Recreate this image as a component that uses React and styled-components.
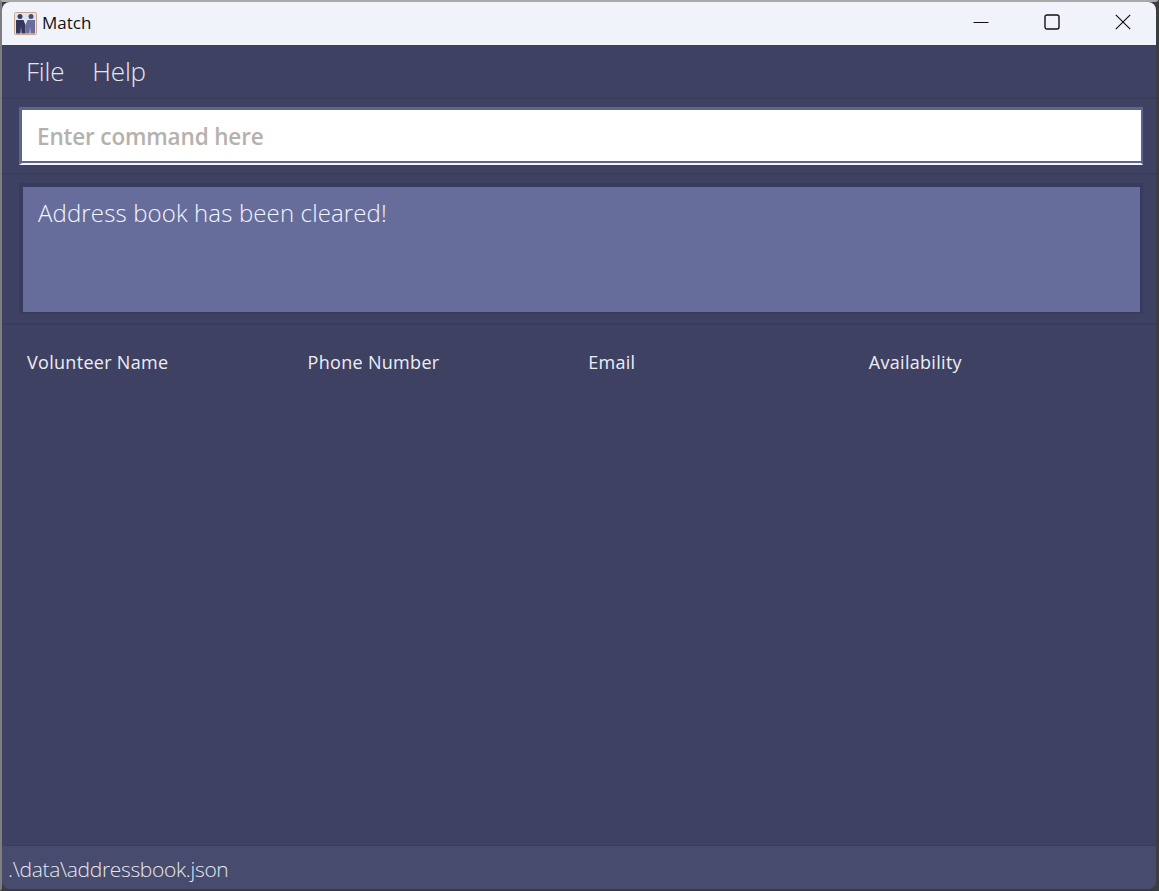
import React from "react";
import styled, { createGlobalStyle } from "styled-components";

const GlobalStyle = createGlobalStyle`
  html, body {
    margin: 0;
    padding: 0;
    height: 100%;
    background: #4a4a4c;
  }
  #root {
    height: 891px;
  }
`;

const Desktop = styled.div`
  width: 1159px;
  height: 891px;
  box-sizing: border-box;
  border-top: 2px solid #a9a9aa;
  border-left: 2px solid #7e7e80;
  border-right: 3px solid #3d3d3e;
  border-bottom: 2px solid #3a3a3b;
  background: #3d3d3e;
  overflow: hidden;
`;

const Window = styled.div`
  width: 100%;
  height: 100%;
  display: flex;
  flex-direction: column;
  background: #3f4163;
  border-radius: 8px;
  overflow: hidden;
`;

const TitleBar = styled.div`
  height: 43px;
  flex: none;
  box-sizing: border-box;
  display: flex;
  align-items: center;
  padding: 0 0 0 12px;
  background: #f0f3f9;
  color: #111;
  font: 400 17px "Open Sans", sans-serif;
`;

const AppIcon = styled.svg`
  width: 23px;
  height: 23px;
  margin: 0 5px 0 0;
  flex: none;
`;

const WindowTitle = styled.span`
  flex: 1;
  padding-bottom: 3px;
`;

const WindowButton = styled.div`
  width: 71px;
  height: 43px;
  box-sizing: border-box;
  display: flex;
  align-items: center;
  justify-content: center;
  padding: 0 0 3px 5px;
`;

const MenuBar = styled.div`
  height: 54px;
  flex: none;
  box-sizing: border-box;
  display: flex;
  align-items: center;
  gap: 28px;
  padding: 0 0 1px 24px;
  border-bottom: 2px solid #3a3c5c;
`;

const MenuItem = styled.span`
  color: #e6e7ee;
  font: 300 26px "Open Sans", sans-serif;
  letter-spacing: -0.2px;
`;

const CommandSection = styled.div`
  height: 76px;
  flex: none;
  box-sizing: border-box;
  padding: 8px 13px 0 17px;
  border-bottom: 2px solid #3a3c5c;
`;

const CommandFrame = styled.div`
  height: 58px;
  box-sizing: border-box;
  border: 3px solid #5f638f;
  border-right-width: 2px;
  border-bottom: 2px solid #f4f4f8;
  background: #fff;
  display: flex;
  align-items: center;
  padding-left: 15px;
  box-shadow: inset 0 -2px 0 #5f638f;
  color: #b5b1ac;
  font: 600 22.5px "Open Sans", sans-serif;
  letter-spacing: -0.15px;
`;

const ResultSection = styled.div`
  height: 150px;
  flex: none;
  box-sizing: border-box;
  padding: 8px 13px 0 17px;
  border-bottom: 2px solid #3a3c5c;
`;

const ResultBox = styled.div`
  height: 131px;
  box-sizing: border-box;
  border-style: solid;
  border-color: #393b5e;
  border-width: 4px 3px 2px 4px;
  background: #676d9b;
  padding: 9px 15px;
  color: #f2f6ff;
  font: 300 24px/33px "Open Sans", sans-serif;
  letter-spacing: 0.13px;
`;

const ListSection = styled.div`
  flex: 1;
  display: grid;
  grid-template-columns: repeat(4, 280.6px);
  align-content: start;
  padding: 24px 0 0 25px;
`;

const ColumnLabel = styled.span`
  color: #eceef4;
  font: 400 18px/26px "Open Sans", sans-serif;
  letter-spacing: 0.3px;
`;

const StatusBar = styled.div`
  height: 44px;
  flex: none;
  box-sizing: border-box;
  display: flex;
  align-items: center;
  padding: 2px 0 0 6px;
  background: #474c6f;
  border-top: 1px solid #3a3c5c;
  color: #e6e7ee;
  font: 300 21px "Open Sans", sans-serif;
  letter-spacing: -0.33px;
`;

const Logo = () => (
  <AppIcon viewBox="0 0 23 23">
    <rect x="0.5" y="0.5" width="22" height="22" rx="1" fill="#dfe4ee" stroke="#c9a68f" />
    <circle cx="6" cy="4.6" r="2.5" fill="#3a3d60" />
    <circle cx="17" cy="4.6" r="2.5" fill="#4a4e74" />
    <path d="M2 8h7.5l2 5v8.5H7.5l-.5-7-.5 7H2z" fill="#34375a" />
    <path d="M21 8h-7.5l-2 5v8.5h4l.5-7 .5 7H21z" fill="#686d9c" />
  </AppIcon>
);

export default function App() {
  return (
    <>
      <GlobalStyle />
      <Desktop>
        <Window>
          <TitleBar>
            <Logo />
            <WindowTitle>Match</WindowTitle>
            <WindowButton>
              <svg width="16" height="16" viewBox="0 0 16 16"><path d="M0.5 8.5h15" stroke="#111" strokeWidth="1.2" /></svg>
            </WindowButton>
            <WindowButton>
              <svg width="16" height="16" viewBox="0 0 16 16"><rect x="1" y="1" width="14" height="14" rx="2" fill="none" stroke="#111" strokeWidth="1.4" /></svg>
            </WindowButton>
            <WindowButton>
              <svg width="16" height="16" viewBox="0 0 16 16"><path d="M0.8 0.8l14.4 14.4M15.2 0.8L0.8 15.2" stroke="#111" strokeWidth="1.2" /></svg>
            </WindowButton>
          </TitleBar>
          <MenuBar>
            <MenuItem>File</MenuItem>
            <MenuItem>Help</MenuItem>
          </MenuBar>
          <CommandSection>
            <CommandFrame>Enter command here</CommandFrame>
          </CommandSection>
          <ResultSection>
            <ResultBox>Address book has been cleared!</ResultBox>
          </ResultSection>
          <ListSection>
            <ColumnLabel>Volunteer Name</ColumnLabel>
            <ColumnLabel>Phone Number</ColumnLabel>
            <ColumnLabel>Email</ColumnLabel>
            <ColumnLabel>Availability</ColumnLabel>
          </ListSection>
          <StatusBar>.\data\addressbook.json</StatusBar>
        </Window>
      </Desktop>
    </>
  );
}
